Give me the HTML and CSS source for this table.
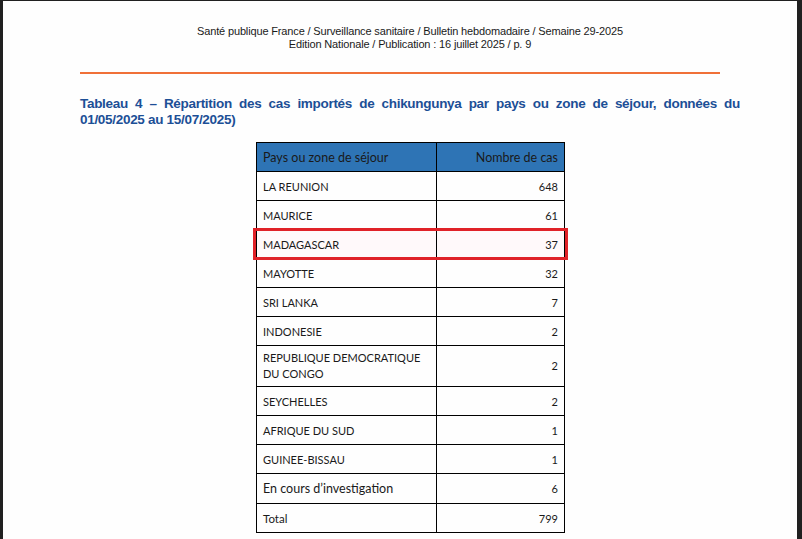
FILE: index.html
```html
<!DOCTYPE html>
<html lang="fr">
<head>
<meta charset="utf-8">
<link rel="stylesheet" href="styles.css">
</head>
<body>
<div class="frame">
  <div class="page">
    <header class="running">
      <div>Santé publique France / Surveillance sanitaire / Bulletin hebdomadaire / Semaine 29-2025</div>
      <div>Edition Nationale / Publication : 16 juillet 2025 / p. 9</div>
    </header>
    <hr class="rule">
    <h2 class="title">Tableau 4 – Répartition des cas importés de chikungunya par pays ou zone de séjour, données du 01/05/2025 au 15/07/2025)</h2>
    <div class="table-wrap">
      <table class="cases">
        <thead>
          <tr><th class="c1">Pays ou zone de séjour</th><th class="c2">Nombre de cas</th></tr>
        </thead>
        <tbody>
          <tr><td class="c1">LA REUNION</td><td class="c2">648</td></tr>
          <tr><td class="c1">MAURICE</td><td class="c2">61</td></tr>
          <tr class="hl"><td class="c1">MADAGASCAR</td><td class="c2">37</td></tr>
          <tr><td class="c1">MAYOTTE</td><td class="c2">32</td></tr>
          <tr><td class="c1">SRI LANKA</td><td class="c2">7</td></tr>
          <tr><td class="c1">INDONESIE</td><td class="c2">2</td></tr>
          <tr class="tall"><td class="c1">REPUBLIQUE DEMOCRATIQUE<br>DU CONGO</td><td class="c2">2</td></tr>
          <tr><td class="c1">SEYCHELLES</td><td class="c2">2</td></tr>
          <tr><td class="c1">AFRIQUE DU SUD</td><td class="c2">1</td></tr>
          <tr><td class="c1">GUINEE-BISSAU</td><td class="c2">1</td></tr>
          <tr class="big"><td class="c1">En cours d’investigation</td><td class="c2">6</td></tr>
          <tr class="total"><td class="c1">Total</td><td class="c2">799</td></tr>
        </tbody>
      </table>
      <div class="highlight"></div>
    </div>
  </div>
</div>
</body>
</html>
```
FILE: styles.css
```css
html, body {
  margin: 0;
  padding: 0;
  background: #202020;
  height: 100%;
  overflow: hidden;
}
.frame {
  padding: 1px 5px 0 3px;
  height: 100%;
  box-sizing: border-box;
}
.page {
  background: #fefefe;
  height: 100%;
  padding: 24px 0 0 0;
  box-sizing: border-box;
}
.running {
  font-family: "Liberation Sans", Arial, sans-serif;
  font-size: 11px;
  letter-spacing: -0.15px;
  line-height: 13px;
  color: #1a1a1a;
  text-align: center;
  padding-left: 20px;
}
.rule {
  border: 0;
  height: 2px;
  background: #f07038;
  margin: 21px 0 0 77px;
  width: 640px;
}
.title {
  font-family: "Liberation Sans", Arial, sans-serif;
  font-weight: bold;
  font-size: 13.5px;
  letter-spacing: -0.3px;
  line-height: 16px;
  color: #1c4f96;
  margin: 22px 0 0 77px;
  width: 660px;
  text-align: justify;
}
.table-wrap {
  position: relative;
  width: 309px;
  margin: 14px 0 0 253px;
}
.cases {
  border-collapse: collapse;
  width: 309px;
  font-family: "Lato", sans-serif;
  color: #1a1a1a;
}
.cases th, .cases td {
  border: 1px solid #000;
  height: 29px;
  padding: 0 6px;
  box-sizing: border-box;
  vertical-align: middle;
}
.cases th {
  background: #2e74b5;
  font-weight: normal;
  font-size: 12.5px;
}
.cases td {
  font-size: 11px;
}
.c1 { width: 180px; text-align: left; }
.c2 { text-align: right; }
.cases .tall td { height: 41px; line-height: 16px; }
.cases .big td { height: 30px; }
.cases .big td.c1 { font-size: 12.5px; }
.cases .total td.c1 { font-size: 11.5px; }
.cases .hl td { background: #fff9fa; }
.highlight {
  position: absolute;
  left: -3px;
  right: -3px;
  top: 86px;
  height: 32px;
  border: 3px solid #e02228;
  box-sizing: border-box;
  pointer-events: none;
}
```
